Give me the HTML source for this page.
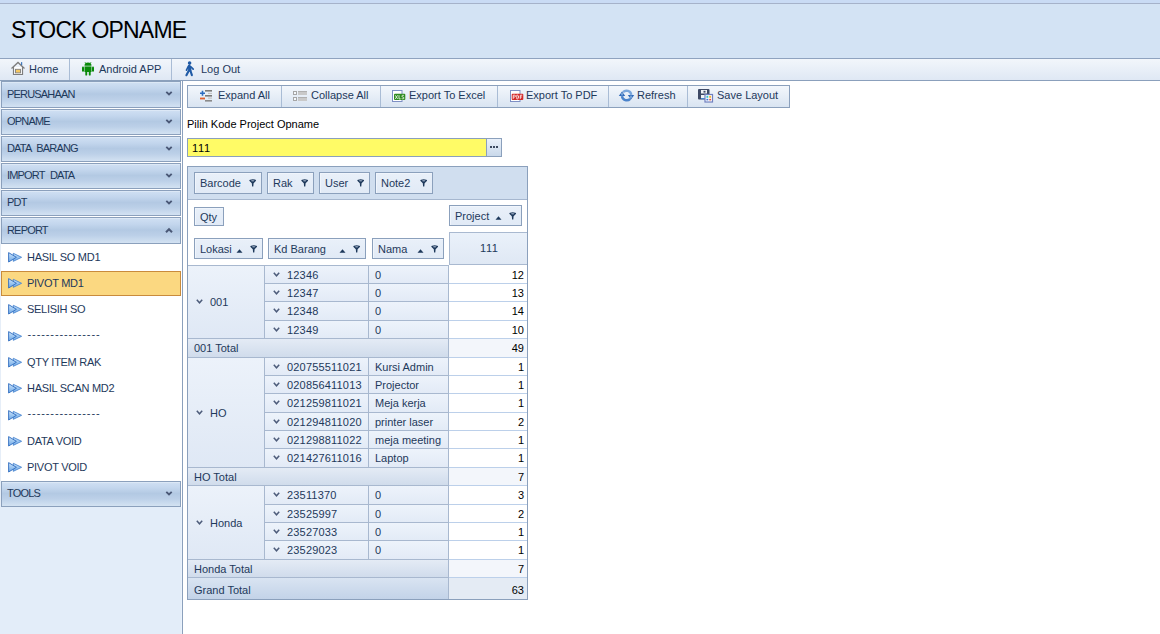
<!DOCTYPE html><html><head><meta charset="utf-8"><style>
html,body{margin:0;padding:0;width:1160px;height:634px;overflow:hidden;background:#fff;position:relative}
.t{position:absolute;white-space:nowrap;font-family:"Liberation Sans",sans-serif}
.r{position:absolute;box-sizing:border-box}
svg{position:absolute;overflow:visible}
</style></head><body>
<div class="r" style="left:0px;top:0px;width:1160px;height:3px;background:#c9dbf4"></div>
<div class="r" style="left:0px;top:3px;width:1160px;height:1px;background:#a5b2c9"></div>
<div class="r" style="left:0px;top:4px;width:1160px;height:54px;background:#d3e3f4"></div>
<div class="r" style="left:0px;top:58px;width:1160px;height:1px;background:#8fa3bf"></div>
<div class="t" style="left:11px;top:19px;font-size:23px;line-height:23px;color:#000;letter-spacing:-0.8px">STOCK OPNAME</div>
<div class="r" style="left:0px;top:59px;width:1160px;height:21px;background:linear-gradient(#f2f6fb,#dfe8f4)"></div>
<div class="r" style="left:0px;top:80px;width:1160px;height:1px;background:#8ba0bc"></div>
<div class="r" style="left:69px;top:59px;width:1px;height:21px;background:#a9bcd5"></div>
<div class="r" style="left:171px;top:59px;width:1px;height:21px;background:#a9bcd5"></div>
<div class="t" style="left:29px;top:64px;font-size:11px;line-height:11px;color:#1e395b;">Home</div>
<div class="t" style="left:99px;top:64px;font-size:11px;line-height:11px;color:#1e395b;">Android APP</div>
<div class="t" style="left:201px;top:64px;font-size:11px;line-height:11px;color:#1e395b;">Log Out</div>
<svg style="left:8px;top:59px" width="20" height="20" viewBox="0 0 20 20">
<path d="M3.5 9.5 L10 3.5 L16.5 9.5" fill="none" stroke="#7d7d7d" stroke-width="1.3"/>
<path d="M5.5 8 V15.5 H14.5 V8" fill="#fff" stroke="#7d7d7d" stroke-width="1.2"/>
<rect x="7.5" y="10.3" width="5" height="3.6" fill="#f6c862" stroke="#808080" stroke-width="0.9"/>
<rect x="13.1" y="3.1" width="1.1" height="3" fill="#2f6fb8"/>
</svg>
<svg style="left:78px;top:59px" width="20" height="20" viewBox="0 0 20 20">
<path d="M6.5 6.8 A3.5 3.3 0 0 1 13.5 6.8 Z" fill="#0a8a0a"/>
<rect x="6.5" y="7.4" width="7" height="5.6" fill="#0a8a0a"/>
<rect x="4" y="7.4" width="2" height="5.3" rx="1" fill="#0a8a0a"/>
<rect x="14" y="7.4" width="2" height="5.3" rx="1" fill="#0a8a0a"/>
<rect x="7.3" y="12" width="1.9" height="4.6" rx="0.9" fill="#0a8a0a"/>
<rect x="10.8" y="12" width="1.9" height="4.6" rx="0.9" fill="#0a8a0a"/>
<path d="M7 3.2 L8 4.6 M13 3.2 L12 4.6" stroke="#0a8a0a" stroke-width="0.8"/>
</svg>
<svg style="left:180px;top:59px" width="20" height="20" viewBox="0 0 20 20">
<circle cx="9.6" cy="4.1" r="1.8" fill="#1f5aa6"/>
<path d="M9.2 7.2 L9.9 11.2" stroke="#1f5aa6" stroke-width="3" stroke-linecap="round"/>
<path d="M10.6 7.6 L13.2 10.2" stroke="#1f5aa6" stroke-width="1.7" stroke-linecap="round"/>
<path d="M8 8 L6.5 11.2" stroke="#1f5aa6" stroke-width="1.7" stroke-linecap="round"/>
<path d="M9 11.2 L6.4 16.2" stroke="#1f5aa6" stroke-width="2.1" stroke-linecap="round"/>
<path d="M10.2 11 L11.9 16.2" stroke="#1f5aa6" stroke-width="2.1" stroke-linecap="round"/>
</svg>
<div class="r" style="left:182px;top:81px;width:1px;height:553px;background:#8ba0bc"></div>
<div class="r" style="left:0px;top:507px;width:182px;height:127px;background:#e3edf9"></div>
<div class="r" style="left:181px;top:507px;width:1px;height:127px;background:#eaf2fb"></div>
<div class="r" style="left:0px;top:81px;width:1px;height:426px;background:#e6eef8"></div>
<div class="r" style="left:1px;top:81px;width:180px;height:27px;border:1px solid #8ba0bc;box-shadow:inset 0 1px 0 #dce8f6;background:linear-gradient(#d0e0f3 0%,#c3d6ed 25%,#b3c9e3 48%,#bcd0e8 70%,#d3e2f2 100%)"></div>
<div class="t" style="left:7px;top:89px;font-size:11px;line-height:11px;color:#1e395b;letter-spacing:-0.82px;word-spacing:3.2px">PERUSAHAAN</div>
<svg style="left:165px;top:91.0px" width="8" height="5" viewBox="0 0 8 5"><path d="M1.3 0.9 L4 3.4 L6.7 0.9" fill="none" stroke="#4a5876" stroke-width="1.9"/></svg>
<div class="r" style="left:1px;top:109px;width:180px;height:26px;border:1px solid #8ba0bc;box-shadow:inset 0 1px 0 #dce8f6;background:linear-gradient(#d0e0f3 0%,#c3d6ed 25%,#b3c9e3 48%,#bcd0e8 70%,#d3e2f2 100%)"></div>
<div class="t" style="left:7px;top:116px;font-size:11px;line-height:11px;color:#1e395b;letter-spacing:-0.82px;word-spacing:3.2px">OPNAME</div>
<svg style="left:165px;top:118.5px" width="8" height="5" viewBox="0 0 8 5"><path d="M1.3 0.9 L4 3.4 L6.7 0.9" fill="none" stroke="#4a5876" stroke-width="1.9"/></svg>
<div class="r" style="left:1px;top:136px;width:180px;height:26px;border:1px solid #8ba0bc;box-shadow:inset 0 1px 0 #dce8f6;background:linear-gradient(#d0e0f3 0%,#c3d6ed 25%,#b3c9e3 48%,#bcd0e8 70%,#d3e2f2 100%)"></div>
<div class="t" style="left:7px;top:143px;font-size:11px;line-height:11px;color:#1e395b;letter-spacing:-0.82px;word-spacing:3.2px">DATA BARANG</div>
<svg style="left:165px;top:145.5px" width="8" height="5" viewBox="0 0 8 5"><path d="M1.3 0.9 L4 3.4 L6.7 0.9" fill="none" stroke="#4a5876" stroke-width="1.9"/></svg>
<div class="r" style="left:1px;top:163px;width:180px;height:26px;border:1px solid #8ba0bc;box-shadow:inset 0 1px 0 #dce8f6;background:linear-gradient(#d0e0f3 0%,#c3d6ed 25%,#b3c9e3 48%,#bcd0e8 70%,#d3e2f2 100%)"></div>
<div class="t" style="left:7px;top:170px;font-size:11px;line-height:11px;color:#1e395b;letter-spacing:-0.82px;word-spacing:3.2px">IMPORT DATA</div>
<svg style="left:165px;top:172.5px" width="8" height="5" viewBox="0 0 8 5"><path d="M1.3 0.9 L4 3.4 L6.7 0.9" fill="none" stroke="#4a5876" stroke-width="1.9"/></svg>
<div class="r" style="left:1px;top:190px;width:180px;height:26px;border:1px solid #8ba0bc;box-shadow:inset 0 1px 0 #dce8f6;background:linear-gradient(#d0e0f3 0%,#c3d6ed 25%,#b3c9e3 48%,#bcd0e8 70%,#d3e2f2 100%)"></div>
<div class="t" style="left:7px;top:197px;font-size:11px;line-height:11px;color:#1e395b;letter-spacing:-0.82px;word-spacing:3.2px">PDT</div>
<svg style="left:165px;top:199.5px" width="8" height="5" viewBox="0 0 8 5"><path d="M1.3 0.9 L4 3.4 L6.7 0.9" fill="none" stroke="#4a5876" stroke-width="1.9"/></svg>
<div class="r" style="left:1px;top:217px;width:180px;height:27px;border:1px solid #8ba0bc;box-shadow:inset 0 1px 0 #dce8f6;background:linear-gradient(#d0e0f3 0%,#c3d6ed 25%,#b3c9e3 48%,#bcd0e8 70%,#d3e2f2 100%)"></div>
<div class="t" style="left:7px;top:225px;font-size:11px;line-height:11px;color:#1e395b;letter-spacing:-0.82px;word-spacing:3.2px">REPORT</div>
<svg style="left:165px;top:227.5px" width="8" height="5" viewBox="0 0 8 5"><path d="M1 4.2 L4 1.2 L7 4.2" fill="none" stroke="#4a5876" stroke-width="2"/></svg>
<div class="r" style="left:1px;top:481px;width:180px;height:26px;border:1px solid #8ba0bc;box-shadow:inset 0 1px 0 #dce8f6;background:linear-gradient(#d0e0f3 0%,#c3d6ed 25%,#b3c9e3 48%,#bcd0e8 70%,#d3e2f2 100%)"></div>
<div class="t" style="left:7px;top:488px;font-size:11px;line-height:11px;color:#1e395b;letter-spacing:-0.82px;word-spacing:3.2px">TOOLS</div>
<svg style="left:165px;top:490.5px" width="8" height="5" viewBox="0 0 8 5"><path d="M1.3 0.9 L4 3.4 L6.7 0.9" fill="none" stroke="#4a5876" stroke-width="1.9"/></svg>
<div class="r" style="left:1px;top:271px;width:180px;height:25px;background:#fbd881;border:1px solid #c98b3c"></div>
<svg style="left:8px;top:252px" width="16" height="12" viewBox="0 0 16 12">
<defs><linearGradient id="ag0" x1="0" y1="0" x2="0" y2="1"><stop offset="0" stop-color="#cfe6fb"/><stop offset="1" stop-color="#6aa6e6"/></linearGradient></defs>
<path d="M5.3 1.3 L13.6 5.3 L5.3 9.3 Z" fill="url(#ag0)" stroke="#4a86d0" stroke-width="0.9"/>
<path d="M0.6 0.6 L8.4 5.3 L0.6 10 Z" fill="url(#ag0)" stroke="#2f6cc0" stroke-width="0.9"/>
</svg>
<div class="t" style="left:27px;top:252px;font-size:11px;line-height:11px;color:#1e395b;letter-spacing:-0.28px">HASIL SO MD1</div>
<svg style="left:8px;top:278px" width="16" height="12" viewBox="0 0 16 12">
<defs><linearGradient id="ag1" x1="0" y1="0" x2="0" y2="1"><stop offset="0" stop-color="#cfe6fb"/><stop offset="1" stop-color="#6aa6e6"/></linearGradient></defs>
<path d="M5.3 1.3 L13.6 5.3 L5.3 9.3 Z" fill="url(#ag1)" stroke="#4a86d0" stroke-width="0.9"/>
<path d="M0.6 0.6 L8.4 5.3 L0.6 10 Z" fill="url(#ag1)" stroke="#2f6cc0" stroke-width="0.9"/>
</svg>
<div class="t" style="left:27px;top:278px;font-size:11px;line-height:11px;color:#1e395b;letter-spacing:-0.28px">PIVOT MD1</div>
<svg style="left:8px;top:304px" width="16" height="12" viewBox="0 0 16 12">
<defs><linearGradient id="ag2" x1="0" y1="0" x2="0" y2="1"><stop offset="0" stop-color="#cfe6fb"/><stop offset="1" stop-color="#6aa6e6"/></linearGradient></defs>
<path d="M5.3 1.3 L13.6 5.3 L5.3 9.3 Z" fill="url(#ag2)" stroke="#4a86d0" stroke-width="0.9"/>
<path d="M0.6 0.6 L8.4 5.3 L0.6 10 Z" fill="url(#ag2)" stroke="#2f6cc0" stroke-width="0.9"/>
</svg>
<div class="t" style="left:27px;top:304px;font-size:11px;line-height:11px;color:#1e395b;letter-spacing:-0.28px">SELISIH SO</div>
<svg style="left:8px;top:331px" width="16" height="12" viewBox="0 0 16 12">
<defs><linearGradient id="ag3" x1="0" y1="0" x2="0" y2="1"><stop offset="0" stop-color="#cfe6fb"/><stop offset="1" stop-color="#6aa6e6"/></linearGradient></defs>
<path d="M5.3 1.3 L13.6 5.3 L5.3 9.3 Z" fill="url(#ag3)" stroke="#4a86d0" stroke-width="0.9"/>
<path d="M0.6 0.6 L8.4 5.3 L0.6 10 Z" fill="url(#ag3)" stroke="#2f6cc0" stroke-width="0.9"/>
</svg>
<div class="t" style="left:27.5px;top:329px;font-size:11px;line-height:11px;color:#1e395b;letter-spacing:0.9px">----------------</div>
<svg style="left:8px;top:357px" width="16" height="12" viewBox="0 0 16 12">
<defs><linearGradient id="ag4" x1="0" y1="0" x2="0" y2="1"><stop offset="0" stop-color="#cfe6fb"/><stop offset="1" stop-color="#6aa6e6"/></linearGradient></defs>
<path d="M5.3 1.3 L13.6 5.3 L5.3 9.3 Z" fill="url(#ag4)" stroke="#4a86d0" stroke-width="0.9"/>
<path d="M0.6 0.6 L8.4 5.3 L0.6 10 Z" fill="url(#ag4)" stroke="#2f6cc0" stroke-width="0.9"/>
</svg>
<div class="t" style="left:27px;top:357px;font-size:11px;line-height:11px;color:#1e395b;letter-spacing:-0.28px">QTY ITEM RAK</div>
<svg style="left:8px;top:383px" width="16" height="12" viewBox="0 0 16 12">
<defs><linearGradient id="ag5" x1="0" y1="0" x2="0" y2="1"><stop offset="0" stop-color="#cfe6fb"/><stop offset="1" stop-color="#6aa6e6"/></linearGradient></defs>
<path d="M5.3 1.3 L13.6 5.3 L5.3 9.3 Z" fill="url(#ag5)" stroke="#4a86d0" stroke-width="0.9"/>
<path d="M0.6 0.6 L8.4 5.3 L0.6 10 Z" fill="url(#ag5)" stroke="#2f6cc0" stroke-width="0.9"/>
</svg>
<div class="t" style="left:27px;top:383px;font-size:11px;line-height:11px;color:#1e395b;letter-spacing:-0.28px">HASIL SCAN MD2</div>
<svg style="left:8px;top:410px" width="16" height="12" viewBox="0 0 16 12">
<defs><linearGradient id="ag6" x1="0" y1="0" x2="0" y2="1"><stop offset="0" stop-color="#cfe6fb"/><stop offset="1" stop-color="#6aa6e6"/></linearGradient></defs>
<path d="M5.3 1.3 L13.6 5.3 L5.3 9.3 Z" fill="url(#ag6)" stroke="#4a86d0" stroke-width="0.9"/>
<path d="M0.6 0.6 L8.4 5.3 L0.6 10 Z" fill="url(#ag6)" stroke="#2f6cc0" stroke-width="0.9"/>
</svg>
<div class="t" style="left:27.5px;top:408px;font-size:11px;line-height:11px;color:#1e395b;letter-spacing:0.9px">----------------</div>
<svg style="left:8px;top:436px" width="16" height="12" viewBox="0 0 16 12">
<defs><linearGradient id="ag7" x1="0" y1="0" x2="0" y2="1"><stop offset="0" stop-color="#cfe6fb"/><stop offset="1" stop-color="#6aa6e6"/></linearGradient></defs>
<path d="M5.3 1.3 L13.6 5.3 L5.3 9.3 Z" fill="url(#ag7)" stroke="#4a86d0" stroke-width="0.9"/>
<path d="M0.6 0.6 L8.4 5.3 L0.6 10 Z" fill="url(#ag7)" stroke="#2f6cc0" stroke-width="0.9"/>
</svg>
<div class="t" style="left:27px;top:436px;font-size:11px;line-height:11px;color:#1e395b;letter-spacing:-0.28px">DATA VOID</div>
<svg style="left:8px;top:462px" width="16" height="12" viewBox="0 0 16 12">
<defs><linearGradient id="ag8" x1="0" y1="0" x2="0" y2="1"><stop offset="0" stop-color="#cfe6fb"/><stop offset="1" stop-color="#6aa6e6"/></linearGradient></defs>
<path d="M5.3 1.3 L13.6 5.3 L5.3 9.3 Z" fill="url(#ag8)" stroke="#4a86d0" stroke-width="0.9"/>
<path d="M0.6 0.6 L8.4 5.3 L0.6 10 Z" fill="url(#ag8)" stroke="#2f6cc0" stroke-width="0.9"/>
</svg>
<div class="t" style="left:27px;top:462px;font-size:11px;line-height:11px;color:#1e395b;letter-spacing:-0.28px">PIVOT VOID</div>
<div class="r" style="left:187px;top:85px;width:603px;height:23px;border:1px solid #8ba0bc;background:linear-gradient(#f3f7fc,#d9e4f1)"></div>
<div class="r" style="left:281px;top:86px;width:1px;height:21px;background:#a9bcd5"></div>
<div class="r" style="left:380px;top:86px;width:1px;height:21px;background:#a9bcd5"></div>
<div class="r" style="left:497px;top:86px;width:1px;height:21px;background:#a9bcd5"></div>
<div class="r" style="left:608px;top:86px;width:1px;height:21px;background:#a9bcd5"></div>
<div class="r" style="left:687px;top:86px;width:1px;height:21px;background:#a9bcd5"></div>
<div class="t" style="left:218px;top:90px;font-size:11px;line-height:11px;color:#1e395b;">Expand All</div>
<div class="t" style="left:311px;top:90px;font-size:11px;line-height:11px;color:#1e395b;">Collapse All</div>
<div class="t" style="left:409px;top:90px;font-size:11px;line-height:11px;color:#1e395b;">Export To Excel</div>
<div class="t" style="left:526px;top:90px;font-size:11px;line-height:11px;color:#1e395b;">Export To PDF</div>
<div class="t" style="left:637px;top:90px;font-size:11px;line-height:11px;color:#1e395b;">Refresh</div>
<div class="t" style="left:717px;top:90px;font-size:11px;line-height:11px;color:#1e395b;">Save Layout</div>
<svg style="left:195px;top:86px" width="20" height="20" viewBox="0 0 20 20">
<path d="M7.5 4.7 V9.7 M5 7.2 H10" stroke="#2a6bc0" stroke-width="1.6"/>
<rect x="5" y="11.6" width="5" height="1.8" fill="#e4602f"/>
<rect x="10" y="4" width="7" height="1.6" fill="#7a7a7a"/>
<rect x="13" y="6.8" width="4" height="1.2" fill="#c4c4c4"/>
<rect x="10" y="9" width="7" height="1.6" fill="#7a7a7a"/>
<rect x="13" y="11.5" width="4" height="1.2" fill="#c4c4c4"/>
<rect x="10" y="14" width="7" height="1.6" fill="#8a8a8a"/>
</svg>
<svg style="left:288px;top:86px" width="20" height="20" viewBox="0 0 20 20">
<rect x="5.5" y="5.5" width="3" height="3" fill="#f4f8fc" stroke="#a6a6a6" stroke-width="1"/>
<rect x="5.5" y="11.5" width="3" height="3" fill="#f4f8fc" stroke="#a6a6a6" stroke-width="1"/>
<rect x="10" y="5" width="9" height="4" fill="#c9c9c9"/>
<rect x="10" y="5" width="9" height="1" fill="#b0b0b0"/>
<rect x="10" y="11" width="9" height="4" fill="#c9c9c9"/>
<rect x="10" y="11" width="9" height="1" fill="#b0b0b0"/>
</svg>
<svg style="left:388px;top:86px" width="20" height="20" viewBox="0 0 20 20">
<rect x="4.5" y="4.5" width="9.5" height="11" fill="#fff" stroke="#7e8fc4" stroke-width="1"/>
<rect x="6" y="7.8" width="11.3" height="6.3" rx="1" fill="#2e8a1f"/>
<path d="M7.3 9.3 L9.6 12.9 M9.6 9.3 L7.3 12.9 M11 9.2 V12.9 H12.7 M16 9.6 C15.4 9.1 13.8 9.1 13.8 10.2 C13.8 11.2 16 10.9 16 12 C16 13 14.3 13 13.7 12.5" fill="none" stroke="#eaf6e4" stroke-width="0.9"/>
</svg>
<svg style="left:506px;top:86px" width="20" height="20" viewBox="0 0 20 20">
<rect x="4.5" y="4.5" width="9.5" height="11" fill="#fff" stroke="#7e8fc4" stroke-width="1"/>
<rect x="5.7" y="7.7" width="11.6" height="6.3" rx="1" fill="#d42a2a"/>
<path d="M7.2 12.9 V9.2 H8.6 C9.8 9.2 9.8 11 8.6 11 H7.2 M10.8 9.2 V12.9 H11.6 C13 12.9 13 9.2 11.6 9.2 Z M14.3 12.9 V9.2 H16.2 M14.3 11 H15.8" fill="none" stroke="#fdeeee" stroke-width="0.9"/>
</svg>
<svg style="left:616px;top:86px" width="20" height="20" viewBox="0 0 20 20">
<path d="M14.2 12.8 A4.7 4.4 0 0 1 6 10.2" fill="none" stroke="#4a83cb" stroke-width="2.4"/>
<path d="M7 6.2 A4.7 4.4 0 0 1 15.2 8.8" fill="none" stroke="#79a6dc" stroke-width="2.4"/>
<path d="M2.8 10 L9.2 10 L6 5.6 Z" fill="#2f68b8"/>
<path d="M11.8 9 L18.2 9 L15 13.4 Z" fill="#2f68b8"/>
<path d="M6 7 V9.4 M15 9.6 V12" stroke="#bfe3fb" stroke-width="0.9"/>
</svg>
<svg style="left:694px;top:84px" width="22" height="22" viewBox="0 0 22 22">
<rect x="4" y="5" width="11.5" height="10.5" rx="1" fill="#3e4a66"/>
<rect x="7" y="6" width="6" height="3.5" fill="#f2f4f8"/>
<rect x="9.5" y="6.8" width="2" height="1.8" fill="#3e4a66"/>
<rect x="7" y="11" width="6" height="3.5" fill="#f2f4f8"/>
<rect x="7" y="14" width="6" height="1.2" fill="#4a86cf"/>
<rect x="11" y="10.5" width="7.5" height="7.5" fill="#fff" stroke="#6f7fbf" stroke-width="1.2"/>
<rect x="12.4" y="11.8" width="1.9" height="2" fill="#39c2c8"/>
<rect x="15.2" y="11.8" width="1.9" height="2" fill="#f2b632"/>
<rect x="12.4" y="14.8" width="1.9" height="1.6" fill="#3a6fd8"/>
<rect x="15.2" y="14.8" width="1.9" height="1.6" fill="#e2553e"/>
</svg>
<div class="t" style="left:187px;top:119px;font-size:11px;line-height:11px;color:#000;">Pilih Kode Project Opname</div>
<div class="r" style="left:187px;top:138px;width:300px;height:19px;border:1px solid #8ba0bc;border-right:none;background:#fffb66"></div>
<div class="t" style="left:192px;top:143px;font-size:11px;line-height:11px;color:#000;letter-spacing:0.7px">111</div>
<div class="r" style="left:486px;top:138px;width:16px;height:19px;border:1px solid #8ba0bc;background:linear-gradient(#eaf1fa,#c9d8ea)"></div>
<div class="r" style="left:490px;top:146px;width:2px;height:2px;background:#3d4a60"></div>
<div class="r" style="left:493px;top:146px;width:2px;height:2px;background:#3d4a60"></div>
<div class="r" style="left:496px;top:146px;width:2px;height:2px;background:#3d4a60"></div>
<div class="r" style="left:187px;top:166px;width:341px;height:434px;border:1px solid #8ba0bc;background:#fff"></div>
<div class="r" style="left:188px;top:167px;width:339px;height:33px;background:#d0deef"></div>
<div class="r" style="left:188px;top:199px;width:339px;height:1px;background:#a6b7cf"></div>
<div class="r" style="left:194px;top:172px;width:68px;height:22px;border:1px solid #8ba0bc;box-shadow:inset 1px 1px 0 #f0f5fc;background:linear-gradient(#e9f0f9,#e1eaf6)"></div>
<div class="t" style="left:200px;top:178px;font-size:11px;line-height:11px;color:#1e395b;">Barcode</div>
<svg style="left:249px;top:179px" width="8" height="8" viewBox="0 0 8 8"><path d="M0.3 1.8 A3.4 1.5 0 0 1 7.1 1.8 L4.6 4.2 L4.3 7.6 L3.1 7.6 L2.8 4.2 Z" fill="#1e395b"/><ellipse cx="3.7" cy="1.8" rx="1.7" ry="0.7" fill="#8d9fb8"/></svg>
<div class="r" style="left:267px;top:172px;width:47px;height:22px;border:1px solid #8ba0bc;box-shadow:inset 1px 1px 0 #f0f5fc;background:linear-gradient(#e9f0f9,#e1eaf6)"></div>
<div class="t" style="left:273px;top:178px;font-size:11px;line-height:11px;color:#1e395b;">Rak</div>
<svg style="left:301px;top:179px" width="8" height="8" viewBox="0 0 8 8"><path d="M0.3 1.8 A3.4 1.5 0 0 1 7.1 1.8 L4.6 4.2 L4.3 7.6 L3.1 7.6 L2.8 4.2 Z" fill="#1e395b"/><ellipse cx="3.7" cy="1.8" rx="1.7" ry="0.7" fill="#8d9fb8"/></svg>
<div class="r" style="left:319px;top:172px;width:51px;height:22px;border:1px solid #8ba0bc;box-shadow:inset 1px 1px 0 #f0f5fc;background:linear-gradient(#e9f0f9,#e1eaf6)"></div>
<div class="t" style="left:325px;top:178px;font-size:11px;line-height:11px;color:#1e395b;">User</div>
<svg style="left:357px;top:179px" width="8" height="8" viewBox="0 0 8 8"><path d="M0.3 1.8 A3.4 1.5 0 0 1 7.1 1.8 L4.6 4.2 L4.3 7.6 L3.1 7.6 L2.8 4.2 Z" fill="#1e395b"/><ellipse cx="3.7" cy="1.8" rx="1.7" ry="0.7" fill="#8d9fb8"/></svg>
<div class="r" style="left:375px;top:172px;width:58px;height:22px;border:1px solid #8ba0bc;box-shadow:inset 1px 1px 0 #f0f5fc;background:linear-gradient(#e9f0f9,#e1eaf6)"></div>
<div class="t" style="left:381px;top:178px;font-size:11px;line-height:11px;color:#1e395b;">Note2</div>
<svg style="left:420px;top:179px" width="8" height="8" viewBox="0 0 8 8"><path d="M0.3 1.8 A3.4 1.5 0 0 1 7.1 1.8 L4.6 4.2 L4.3 7.6 L3.1 7.6 L2.8 4.2 Z" fill="#1e395b"/><ellipse cx="3.7" cy="1.8" rx="1.7" ry="0.7" fill="#8d9fb8"/></svg>
<div class="r" style="left:194px;top:207px;width:30px;height:19px;border:1px solid #8ba0bc;box-shadow:inset 1px 1px 0 #f0f5fc;background:linear-gradient(#e9f0f9,#e1eaf6)"></div>
<div class="t" style="left:200px;top:212px;font-size:11px;line-height:11px;color:#1e395b;">Qty</div>
<div class="r" style="left:449px;top:205px;width:73px;height:21px;border:1px solid #8ba0bc;box-shadow:inset 1px 1px 0 #f0f5fc;background:linear-gradient(#e9f0f9,#e1eaf6)"></div>
<div class="t" style="left:455px;top:211px;font-size:11px;line-height:11px;color:#1e395b;">Project</div>
<svg style="left:509px;top:212px" width="8" height="8" viewBox="0 0 8 8"><path d="M0.3 1.8 A3.4 1.5 0 0 1 7.1 1.8 L4.6 4.2 L4.3 7.6 L3.1 7.6 L2.8 4.2 Z" fill="#1e395b"/><ellipse cx="3.7" cy="1.8" rx="1.7" ry="0.7" fill="#8d9fb8"/></svg>
<svg style="left:495px;top:215.5px" width="7" height="4" viewBox="0 0 7 4"><path d="M0.5 3.8 L3.5 0.3 L6.5 3.8 Z" fill="#1e395b"/></svg>
<div class="r" style="left:194px;top:238px;width:69px;height:21px;border:1px solid #8ba0bc;box-shadow:inset 1px 1px 0 #f0f5fc;background:linear-gradient(#e9f0f9,#e1eaf6)"></div>
<div class="t" style="left:200px;top:244px;font-size:11px;line-height:11px;color:#1e395b;">Lokasi</div>
<svg style="left:250px;top:245px" width="8" height="8" viewBox="0 0 8 8"><path d="M0.3 1.8 A3.4 1.5 0 0 1 7.1 1.8 L4.6 4.2 L4.3 7.6 L3.1 7.6 L2.8 4.2 Z" fill="#1e395b"/><ellipse cx="3.7" cy="1.8" rx="1.7" ry="0.7" fill="#8d9fb8"/></svg>
<svg style="left:236px;top:248.5px" width="7" height="4" viewBox="0 0 7 4"><path d="M0.5 3.8 L3.5 0.3 L6.5 3.8 Z" fill="#1e395b"/></svg>
<div class="r" style="left:268px;top:238px;width:98px;height:21px;border:1px solid #8ba0bc;box-shadow:inset 1px 1px 0 #f0f5fc;background:linear-gradient(#e9f0f9,#e1eaf6)"></div>
<div class="t" style="left:274px;top:244px;font-size:11px;line-height:11px;color:#1e395b;">Kd Barang</div>
<svg style="left:353px;top:245px" width="8" height="8" viewBox="0 0 8 8"><path d="M0.3 1.8 A3.4 1.5 0 0 1 7.1 1.8 L4.6 4.2 L4.3 7.6 L3.1 7.6 L2.8 4.2 Z" fill="#1e395b"/><ellipse cx="3.7" cy="1.8" rx="1.7" ry="0.7" fill="#8d9fb8"/></svg>
<svg style="left:339px;top:248.5px" width="7" height="4" viewBox="0 0 7 4"><path d="M0.5 3.8 L3.5 0.3 L6.5 3.8 Z" fill="#1e395b"/></svg>
<div class="r" style="left:372px;top:238px;width:72px;height:21px;border:1px solid #8ba0bc;box-shadow:inset 1px 1px 0 #f0f5fc;background:linear-gradient(#e9f0f9,#e1eaf6)"></div>
<div class="t" style="left:378px;top:244px;font-size:11px;line-height:11px;color:#1e395b;">Nama</div>
<svg style="left:431px;top:245px" width="8" height="8" viewBox="0 0 8 8"><path d="M0.3 1.8 A3.4 1.5 0 0 1 7.1 1.8 L4.6 4.2 L4.3 7.6 L3.1 7.6 L2.8 4.2 Z" fill="#1e395b"/><ellipse cx="3.7" cy="1.8" rx="1.7" ry="0.7" fill="#8d9fb8"/></svg>
<svg style="left:417px;top:248.5px" width="7" height="4" viewBox="0 0 7 4"><path d="M0.5 3.8 L3.5 0.3 L6.5 3.8 Z" fill="#1e395b"/></svg>
<div class="r" style="left:449px;top:232px;width:78px;height:33px;border-left:1px solid #a9b9d0;border-top:1px solid #a9b9d0;border-bottom:1px solid #a9b9d0;background:linear-gradient(#eaf1fa,#dfe8f4)"></div>
<div class="t" style="left:480px;top:243px;font-size:11px;line-height:11px;color:#1e395b;letter-spacing:0.6px">111</div>
<div class="r" style="left:188px;top:265px;width:77px;height:74px;border-top:1px solid #a8b8cf;border-right:1px solid #a8b8cf;background:linear-gradient(#ecf2fa,#dfe8f5)"></div>
<svg style="left:196px;top:299px" width="7" height="5" viewBox="0 0 7 5"><path d="M0.8 0.8 L3.5 3.8 L6.2 0.8" fill="none" stroke="#4d5c7a" stroke-width="1.5"/></svg>
<div class="t" style="left:210px;top:297px;font-size:11px;line-height:11px;color:#1e395b;">001</div>
<div class="r" style="left:265px;top:265px;width:104px;height:19px;border-top:1px solid #a8b8cf;border-right:1px solid #a8b8cf;background:linear-gradient(#edf3fb,#e2eaf6)"></div>
<div class="r" style="left:369px;top:265px;width:80px;height:19px;border-top:1px solid #a8b8cf;border-right:1px solid #a8b8cf;background:linear-gradient(#edf3fb,#e2eaf6)"></div>
<div class="r" style="left:449px;top:265px;width:78px;height:19px;background:#fff"></div>
<svg style="left:273px;top:272px" width="7" height="5" viewBox="0 0 7 5"><path d="M0.8 0.8 L3.5 3.8 L6.2 0.8" fill="none" stroke="#4d5c7a" stroke-width="1.5"/></svg>
<div class="t" style="left:287px;top:270px;font-size:11px;line-height:11px;color:#1e395b;letter-spacing:0.18px">12346</div>
<div class="t" style="left:375px;top:270px;font-size:11px;line-height:11px;color:#1e395b;">0</div>
<div class="t" style="left:449px;top:270px;font-size:11px;line-height:11px;color:#000;width:75px;text-align:right">12</div>
<div class="r" style="left:265px;top:283px;width:104px;height:19px;border-top:1px solid #a8b8cf;border-right:1px solid #a8b8cf;background:linear-gradient(#edf3fb,#e2eaf6)"></div>
<div class="r" style="left:369px;top:283px;width:80px;height:19px;border-top:1px solid #a8b8cf;border-right:1px solid #a8b8cf;background:linear-gradient(#edf3fb,#e2eaf6)"></div>
<div class="r" style="left:449px;top:283px;width:78px;height:19px;border-top:1px solid #bcd0ea;background:#fff"></div>
<svg style="left:273px;top:290px" width="7" height="5" viewBox="0 0 7 5"><path d="M0.8 0.8 L3.5 3.8 L6.2 0.8" fill="none" stroke="#4d5c7a" stroke-width="1.5"/></svg>
<div class="t" style="left:287px;top:288px;font-size:11px;line-height:11px;color:#1e395b;letter-spacing:0.18px">12347</div>
<div class="t" style="left:375px;top:288px;font-size:11px;line-height:11px;color:#1e395b;">0</div>
<div class="t" style="left:449px;top:288px;font-size:11px;line-height:11px;color:#000;width:75px;text-align:right">13</div>
<div class="r" style="left:265px;top:301px;width:104px;height:20px;border-top:1px solid #a8b8cf;border-right:1px solid #a8b8cf;background:linear-gradient(#edf3fb,#e2eaf6)"></div>
<div class="r" style="left:369px;top:301px;width:80px;height:20px;border-top:1px solid #a8b8cf;border-right:1px solid #a8b8cf;background:linear-gradient(#edf3fb,#e2eaf6)"></div>
<div class="r" style="left:449px;top:301px;width:78px;height:20px;border-top:1px solid #bcd0ea;background:#fff"></div>
<svg style="left:273px;top:308px" width="7" height="5" viewBox="0 0 7 5"><path d="M0.8 0.8 L3.5 3.8 L6.2 0.8" fill="none" stroke="#4d5c7a" stroke-width="1.5"/></svg>
<div class="t" style="left:287px;top:306px;font-size:11px;line-height:11px;color:#1e395b;letter-spacing:0.18px">12348</div>
<div class="t" style="left:375px;top:306px;font-size:11px;line-height:11px;color:#1e395b;">0</div>
<div class="t" style="left:449px;top:306px;font-size:11px;line-height:11px;color:#000;width:75px;text-align:right">14</div>
<div class="r" style="left:265px;top:320px;width:104px;height:19px;border-top:1px solid #a8b8cf;border-right:1px solid #a8b8cf;background:linear-gradient(#edf3fb,#e2eaf6)"></div>
<div class="r" style="left:369px;top:320px;width:80px;height:19px;border-top:1px solid #a8b8cf;border-right:1px solid #a8b8cf;background:linear-gradient(#edf3fb,#e2eaf6)"></div>
<div class="r" style="left:449px;top:320px;width:78px;height:19px;border-top:1px solid #bcd0ea;background:#fff"></div>
<svg style="left:273px;top:327px" width="7" height="5" viewBox="0 0 7 5"><path d="M0.8 0.8 L3.5 3.8 L6.2 0.8" fill="none" stroke="#4d5c7a" stroke-width="1.5"/></svg>
<div class="t" style="left:287px;top:325px;font-size:11px;line-height:11px;color:#1e395b;letter-spacing:0.18px">12349</div>
<div class="t" style="left:375px;top:325px;font-size:11px;line-height:11px;color:#1e395b;">0</div>
<div class="t" style="left:449px;top:325px;font-size:11px;line-height:11px;color:#000;width:75px;text-align:right">10</div>
<div class="r" style="left:188px;top:338px;width:261px;height:20px;border-top:1px solid #a8b8cf;border-right:1px solid #a8b8cf;background:linear-gradient(#e4ebf5,#cfdbeb)"></div>
<div class="r" style="left:449px;top:338px;width:78px;height:20px;border-top:1px solid #bcd0ea;background:#f3f6fb"></div>
<div class="t" style="left:194px;top:343px;font-size:11px;line-height:11px;color:#1e395b;">001 Total</div>
<div class="t" style="left:449px;top:343px;font-size:11px;line-height:11px;color:#000;width:75px;text-align:right">49</div>
<div class="r" style="left:188px;top:357px;width:77px;height:111px;border-top:1px solid #a8b8cf;border-right:1px solid #a8b8cf;background:linear-gradient(#ecf2fa,#dfe8f5)"></div>
<svg style="left:196px;top:410px" width="7" height="5" viewBox="0 0 7 5"><path d="M0.8 0.8 L3.5 3.8 L6.2 0.8" fill="none" stroke="#4d5c7a" stroke-width="1.5"/></svg>
<div class="t" style="left:210px;top:408px;font-size:11px;line-height:11px;color:#1e395b;">HO</div>
<div class="r" style="left:265px;top:357px;width:104px;height:19px;border-top:1px solid #a8b8cf;border-right:1px solid #a8b8cf;background:linear-gradient(#edf3fb,#e2eaf6)"></div>
<div class="r" style="left:369px;top:357px;width:80px;height:19px;border-top:1px solid #a8b8cf;border-right:1px solid #a8b8cf;background:linear-gradient(#edf3fb,#e2eaf6)"></div>
<div class="r" style="left:449px;top:357px;width:78px;height:19px;border-top:1px solid #bcd0ea;background:#fff"></div>
<svg style="left:273px;top:364px" width="7" height="5" viewBox="0 0 7 5"><path d="M0.8 0.8 L3.5 3.8 L6.2 0.8" fill="none" stroke="#4d5c7a" stroke-width="1.5"/></svg>
<div class="t" style="left:287px;top:362px;font-size:11px;line-height:11px;color:#1e395b;letter-spacing:0.18px">020755511021</div>
<div class="t" style="left:375px;top:362px;font-size:11px;line-height:11px;color:#1e395b;">Kursi Admin</div>
<div class="t" style="left:449px;top:362px;font-size:11px;line-height:11px;color:#000;width:75px;text-align:right">1</div>
<div class="r" style="left:265px;top:375px;width:104px;height:19px;border-top:1px solid #a8b8cf;border-right:1px solid #a8b8cf;background:linear-gradient(#edf3fb,#e2eaf6)"></div>
<div class="r" style="left:369px;top:375px;width:80px;height:19px;border-top:1px solid #a8b8cf;border-right:1px solid #a8b8cf;background:linear-gradient(#edf3fb,#e2eaf6)"></div>
<div class="r" style="left:449px;top:375px;width:78px;height:19px;border-top:1px solid #bcd0ea;background:#fff"></div>
<svg style="left:273px;top:382px" width="7" height="5" viewBox="0 0 7 5"><path d="M0.8 0.8 L3.5 3.8 L6.2 0.8" fill="none" stroke="#4d5c7a" stroke-width="1.5"/></svg>
<div class="t" style="left:287px;top:380px;font-size:11px;line-height:11px;color:#1e395b;letter-spacing:0.18px">020856411013</div>
<div class="t" style="left:375px;top:380px;font-size:11px;line-height:11px;color:#1e395b;">Projector</div>
<div class="t" style="left:449px;top:380px;font-size:11px;line-height:11px;color:#000;width:75px;text-align:right">1</div>
<div class="r" style="left:265px;top:393px;width:104px;height:20px;border-top:1px solid #a8b8cf;border-right:1px solid #a8b8cf;background:linear-gradient(#edf3fb,#e2eaf6)"></div>
<div class="r" style="left:369px;top:393px;width:80px;height:20px;border-top:1px solid #a8b8cf;border-right:1px solid #a8b8cf;background:linear-gradient(#edf3fb,#e2eaf6)"></div>
<div class="r" style="left:449px;top:393px;width:78px;height:20px;border-top:1px solid #bcd0ea;background:#fff"></div>
<svg style="left:273px;top:400px" width="7" height="5" viewBox="0 0 7 5"><path d="M0.8 0.8 L3.5 3.8 L6.2 0.8" fill="none" stroke="#4d5c7a" stroke-width="1.5"/></svg>
<div class="t" style="left:287px;top:398px;font-size:11px;line-height:11px;color:#1e395b;letter-spacing:0.18px">021259811021</div>
<div class="t" style="left:375px;top:398px;font-size:11px;line-height:11px;color:#1e395b;">Meja kerja</div>
<div class="t" style="left:449px;top:398px;font-size:11px;line-height:11px;color:#000;width:75px;text-align:right">1</div>
<div class="r" style="left:265px;top:412px;width:104px;height:19px;border-top:1px solid #a8b8cf;border-right:1px solid #a8b8cf;background:linear-gradient(#edf3fb,#e2eaf6)"></div>
<div class="r" style="left:369px;top:412px;width:80px;height:19px;border-top:1px solid #a8b8cf;border-right:1px solid #a8b8cf;background:linear-gradient(#edf3fb,#e2eaf6)"></div>
<div class="r" style="left:449px;top:412px;width:78px;height:19px;border-top:1px solid #bcd0ea;background:#fff"></div>
<svg style="left:273px;top:419px" width="7" height="5" viewBox="0 0 7 5"><path d="M0.8 0.8 L3.5 3.8 L6.2 0.8" fill="none" stroke="#4d5c7a" stroke-width="1.5"/></svg>
<div class="t" style="left:287px;top:417px;font-size:11px;line-height:11px;color:#1e395b;letter-spacing:0.18px">021294811020</div>
<div class="t" style="left:375px;top:417px;font-size:11px;line-height:11px;color:#1e395b;">printer laser</div>
<div class="t" style="left:449px;top:417px;font-size:11px;line-height:11px;color:#000;width:75px;text-align:right">2</div>
<div class="r" style="left:265px;top:430px;width:104px;height:19px;border-top:1px solid #a8b8cf;border-right:1px solid #a8b8cf;background:linear-gradient(#edf3fb,#e2eaf6)"></div>
<div class="r" style="left:369px;top:430px;width:80px;height:19px;border-top:1px solid #a8b8cf;border-right:1px solid #a8b8cf;background:linear-gradient(#edf3fb,#e2eaf6)"></div>
<div class="r" style="left:449px;top:430px;width:78px;height:19px;border-top:1px solid #bcd0ea;background:#fff"></div>
<svg style="left:273px;top:437px" width="7" height="5" viewBox="0 0 7 5"><path d="M0.8 0.8 L3.5 3.8 L6.2 0.8" fill="none" stroke="#4d5c7a" stroke-width="1.5"/></svg>
<div class="t" style="left:287px;top:435px;font-size:11px;line-height:11px;color:#1e395b;letter-spacing:0.18px">021298811022</div>
<div class="t" style="left:375px;top:435px;font-size:11px;line-height:11px;color:#1e395b;">meja meeting</div>
<div class="t" style="left:449px;top:435px;font-size:11px;line-height:11px;color:#000;width:75px;text-align:right">1</div>
<div class="r" style="left:265px;top:448px;width:104px;height:20px;border-top:1px solid #a8b8cf;border-right:1px solid #a8b8cf;background:linear-gradient(#edf3fb,#e2eaf6)"></div>
<div class="r" style="left:369px;top:448px;width:80px;height:20px;border-top:1px solid #a8b8cf;border-right:1px solid #a8b8cf;background:linear-gradient(#edf3fb,#e2eaf6)"></div>
<div class="r" style="left:449px;top:448px;width:78px;height:20px;border-top:1px solid #bcd0ea;background:#fff"></div>
<svg style="left:273px;top:455px" width="7" height="5" viewBox="0 0 7 5"><path d="M0.8 0.8 L3.5 3.8 L6.2 0.8" fill="none" stroke="#4d5c7a" stroke-width="1.5"/></svg>
<div class="t" style="left:287px;top:453px;font-size:11px;line-height:11px;color:#1e395b;letter-spacing:0.18px">021427611016</div>
<div class="t" style="left:375px;top:453px;font-size:11px;line-height:11px;color:#1e395b;">Laptop</div>
<div class="t" style="left:449px;top:453px;font-size:11px;line-height:11px;color:#000;width:75px;text-align:right">1</div>
<div class="r" style="left:188px;top:467px;width:261px;height:19px;border-top:1px solid #a8b8cf;border-right:1px solid #a8b8cf;background:linear-gradient(#e4ebf5,#cfdbeb)"></div>
<div class="r" style="left:449px;top:467px;width:78px;height:19px;border-top:1px solid #bcd0ea;background:#f3f6fb"></div>
<div class="t" style="left:194px;top:472px;font-size:11px;line-height:11px;color:#1e395b;">HO Total</div>
<div class="t" style="left:449px;top:472px;font-size:11px;line-height:11px;color:#000;width:75px;text-align:right">7</div>
<div class="r" style="left:188px;top:485px;width:77px;height:75px;border-top:1px solid #a8b8cf;border-right:1px solid #a8b8cf;background:linear-gradient(#ecf2fa,#dfe8f5)"></div>
<svg style="left:196px;top:520px" width="7" height="5" viewBox="0 0 7 5"><path d="M0.8 0.8 L3.5 3.8 L6.2 0.8" fill="none" stroke="#4d5c7a" stroke-width="1.5"/></svg>
<div class="t" style="left:210px;top:518px;font-size:11px;line-height:11px;color:#1e395b;">Honda</div>
<div class="r" style="left:265px;top:485px;width:104px;height:20px;border-top:1px solid #a8b8cf;border-right:1px solid #a8b8cf;background:linear-gradient(#edf3fb,#e2eaf6)"></div>
<div class="r" style="left:369px;top:485px;width:80px;height:20px;border-top:1px solid #a8b8cf;border-right:1px solid #a8b8cf;background:linear-gradient(#edf3fb,#e2eaf6)"></div>
<div class="r" style="left:449px;top:485px;width:78px;height:20px;border-top:1px solid #bcd0ea;background:#fff"></div>
<svg style="left:273px;top:492px" width="7" height="5" viewBox="0 0 7 5"><path d="M0.8 0.8 L3.5 3.8 L6.2 0.8" fill="none" stroke="#4d5c7a" stroke-width="1.5"/></svg>
<div class="t" style="left:287px;top:490px;font-size:11px;line-height:11px;color:#1e395b;letter-spacing:0.18px">23511370</div>
<div class="t" style="left:375px;top:490px;font-size:11px;line-height:11px;color:#1e395b;">0</div>
<div class="t" style="left:449px;top:490px;font-size:11px;line-height:11px;color:#000;width:75px;text-align:right">3</div>
<div class="r" style="left:265px;top:504px;width:104px;height:19px;border-top:1px solid #a8b8cf;border-right:1px solid #a8b8cf;background:linear-gradient(#edf3fb,#e2eaf6)"></div>
<div class="r" style="left:369px;top:504px;width:80px;height:19px;border-top:1px solid #a8b8cf;border-right:1px solid #a8b8cf;background:linear-gradient(#edf3fb,#e2eaf6)"></div>
<div class="r" style="left:449px;top:504px;width:78px;height:19px;border-top:1px solid #bcd0ea;background:#fff"></div>
<svg style="left:273px;top:511px" width="7" height="5" viewBox="0 0 7 5"><path d="M0.8 0.8 L3.5 3.8 L6.2 0.8" fill="none" stroke="#4d5c7a" stroke-width="1.5"/></svg>
<div class="t" style="left:287px;top:509px;font-size:11px;line-height:11px;color:#1e395b;letter-spacing:0.18px">23525997</div>
<div class="t" style="left:375px;top:509px;font-size:11px;line-height:11px;color:#1e395b;">0</div>
<div class="t" style="left:449px;top:509px;font-size:11px;line-height:11px;color:#000;width:75px;text-align:right">2</div>
<div class="r" style="left:265px;top:522px;width:104px;height:19px;border-top:1px solid #a8b8cf;border-right:1px solid #a8b8cf;background:linear-gradient(#edf3fb,#e2eaf6)"></div>
<div class="r" style="left:369px;top:522px;width:80px;height:19px;border-top:1px solid #a8b8cf;border-right:1px solid #a8b8cf;background:linear-gradient(#edf3fb,#e2eaf6)"></div>
<div class="r" style="left:449px;top:522px;width:78px;height:19px;border-top:1px solid #bcd0ea;background:#fff"></div>
<svg style="left:273px;top:529px" width="7" height="5" viewBox="0 0 7 5"><path d="M0.8 0.8 L3.5 3.8 L6.2 0.8" fill="none" stroke="#4d5c7a" stroke-width="1.5"/></svg>
<div class="t" style="left:287px;top:527px;font-size:11px;line-height:11px;color:#1e395b;letter-spacing:0.18px">23527033</div>
<div class="t" style="left:375px;top:527px;font-size:11px;line-height:11px;color:#1e395b;">0</div>
<div class="t" style="left:449px;top:527px;font-size:11px;line-height:11px;color:#000;width:75px;text-align:right">1</div>
<div class="r" style="left:265px;top:540px;width:104px;height:20px;border-top:1px solid #a8b8cf;border-right:1px solid #a8b8cf;background:linear-gradient(#edf3fb,#e2eaf6)"></div>
<div class="r" style="left:369px;top:540px;width:80px;height:20px;border-top:1px solid #a8b8cf;border-right:1px solid #a8b8cf;background:linear-gradient(#edf3fb,#e2eaf6)"></div>
<div class="r" style="left:449px;top:540px;width:78px;height:20px;border-top:1px solid #bcd0ea;background:#fff"></div>
<svg style="left:273px;top:547px" width="7" height="5" viewBox="0 0 7 5"><path d="M0.8 0.8 L3.5 3.8 L6.2 0.8" fill="none" stroke="#4d5c7a" stroke-width="1.5"/></svg>
<div class="t" style="left:287px;top:545px;font-size:11px;line-height:11px;color:#1e395b;letter-spacing:0.18px">23529023</div>
<div class="t" style="left:375px;top:545px;font-size:11px;line-height:11px;color:#1e395b;">0</div>
<div class="t" style="left:449px;top:545px;font-size:11px;line-height:11px;color:#000;width:75px;text-align:right">1</div>
<div class="r" style="left:188px;top:559px;width:261px;height:19px;border-top:1px solid #a8b8cf;border-right:1px solid #a8b8cf;background:linear-gradient(#e4ebf5,#cfdbeb)"></div>
<div class="r" style="left:449px;top:559px;width:78px;height:19px;border-top:1px solid #bcd0ea;background:#f3f6fb"></div>
<div class="t" style="left:194px;top:564px;font-size:11px;line-height:11px;color:#1e395b;">Honda Total</div>
<div class="t" style="left:449px;top:564px;font-size:11px;line-height:11px;color:#000;width:75px;text-align:right">7</div>
<div class="r" style="left:188px;top:577px;width:261px;height:22px;border-top:1px solid #a8b8cf;border-right:1px solid #a8b8cf;background:linear-gradient(#d9e4f2,#c3d3e8)"></div>
<div class="r" style="left:449px;top:577px;width:78px;height:22px;border-top:1px solid #bcd0ea;background:#e4ebf4"></div>
<div class="t" style="left:194px;top:585px;font-size:11px;line-height:11px;color:#1e395b;">Grand Total</div>
<div class="t" style="left:449px;top:585px;font-size:11px;line-height:11px;color:#000;width:75px;text-align:right">63</div>
</body></html>
